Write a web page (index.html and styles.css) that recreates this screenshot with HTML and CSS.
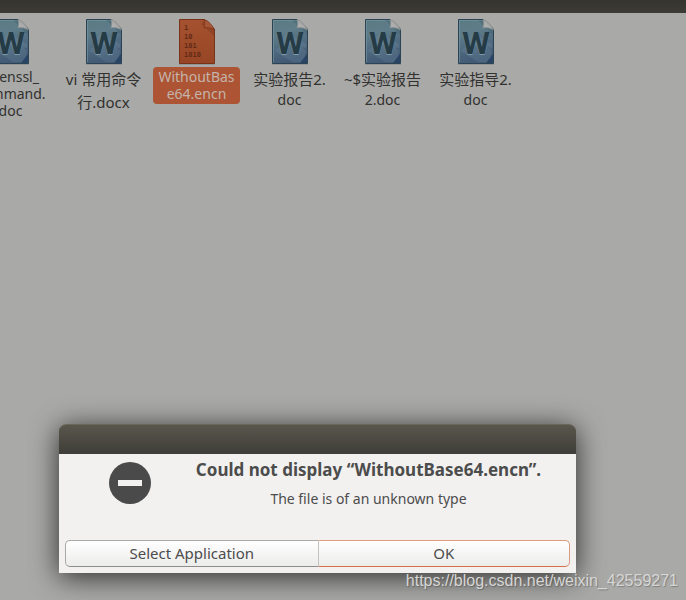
FILE: index.html
```html
<!DOCTYPE html>
<html lang="en">
<head>
<meta charset="utf-8">
<title>Files</title>
<link rel="stylesheet" href="styles.css">
</head>
<body>
<svg class="defs" aria-hidden="true">
  <defs>
    <linearGradient id="page" x1="0" y1="0" x2="0.25" y2="1">
      <stop offset="0" stop-color="#5a7b82"/>
      <stop offset="0.35" stop-color="#5e7c89"/>
      <stop offset="0.7" stop-color="#4e687e"/>
      <stop offset="1" stop-color="#425a74"/>
    </linearGradient>
    <linearGradient id="fold" x1="0" y1="1" x2="0.8" y2="0.2">
      <stop offset="0" stop-color="#bcbcba"/>
      <stop offset="0.6" stop-color="#a8a9a8"/>
      <stop offset="1" stop-color="#747a7c"/>
    </linearGradient>
    <linearGradient id="orange" x1="0" y1="0" x2="0" y2="1">
      <stop offset="0" stop-color="#a4522f"/>
      <stop offset="1" stop-color="#984525"/>
    </linearGradient>
    <symbol id="word" viewBox="0 0 36 46">
      <rect x="0" y="44" width="36" height="2" fill="#000" opacity="0.12"/>
      <path d="M.5.5H25L35.500 10V44.500H.5Z" fill="url(#page)" stroke="#2b4354"/>
      <path d="M1.500 43.500V1.500H25" fill="none" stroke="#7898a0" opacity="0.6"/>
      <path d="M3 32L18 17L34 32L32 43H20Z" fill="#8aa9bd" opacity="0.16"/>
      <path d="M7 24L15 14L34 25V29Z" fill="#9bb7c4" opacity="0.16"/>
      <path d="M35 35V44H28Z" fill="#294464"/>
      <path d="M20 1H25V9L35 11V16Z" fill="#28434c" opacity="0.2"/>
      <path d="M25 .5C26 3 26 6 25 9C29 8 33 9 35.500 11C33 6 30 2 25 .5Z" fill="url(#fold)" stroke="#8a8f8f" stroke-width=".6"/>
      <text x="18" y="36" class="glyph-w glyph-light">W</text>
      <text x="18" y="35" class="glyph-w">W</text>
    </symbol>
  </defs>
</svg>

<div class="desktop">
  <header class="panel"></header>
  <main class="files">
    <figure class="file">
      <svg class="icon" aria-hidden="true"><use href="#word"/></svg>
      <figcaption class="label"><span>openssl_</span><span>command.</span><span>doc</span></figcaption>
    </figure>
    <figure class="file">
      <svg class="icon" aria-hidden="true"><use href="#word"/></svg>
      <figcaption class="label"><span class="tall">vi 常用命令</span><span class="tall">行.docx</span></figcaption>
    </figure>
    <figure class="file selected">
      <svg class="icon" viewBox="0 0 36 46" aria-hidden="true">
        <rect x="0" y="44" width="36" height="2" fill="#000" opacity="0.12"/>
        <path d="M.5.5H25L35.500 10V44.500H.5Z" fill="url(#orange)" stroke="#783219"/>
        <path d="M25 1V9L35 10V17L22 5Z" fill="#6c2c16" opacity="0.3"/>
        <path d="M25 .5C26 3 26 6 25 9C29 8 33 9 35.500 11C33 6 30 2 25 .5Z" fill="#a65735" stroke="#783219" stroke-width=".8"/>
        <g class="bits">
          <text x="5" y="11">1</text>
          <text x="5" y="20">10</text>
          <text x="5" y="29">101</text>
          <text x="5" y="38">1010</text>
        </g>
      </svg>
      <figcaption class="label"><span>WithoutBas</span><span>e64.encn</span></figcaption>
    </figure>
    <figure class="file">
      <svg class="icon" aria-hidden="true"><use href="#word"/></svg>
      <figcaption class="label"><span class="tall">实验报告2.</span><span>doc</span></figcaption>
    </figure>
    <figure class="file">
      <svg class="icon" aria-hidden="true"><use href="#word"/></svg>
      <figcaption class="label"><span class="tall">~$实验报告</span><span>2.doc</span></figcaption>
    </figure>
    <figure class="file">
      <svg class="icon" aria-hidden="true"><use href="#word"/></svg>
      <figcaption class="label"><span class="tall">实验指导2.</span><span>doc</span></figcaption>
    </figure>
  </main>

  <section class="dialog" role="alertdialog" aria-labelledby="title" aria-describedby="detail">
    <div class="titlebar"></div>
    <div class="body">
      <div class="message">
        <svg class="sign" viewBox="0 0 42 42" aria-hidden="true">
          <circle cx="21" cy="21" r="21" fill="#4a4a4a"/>
          <rect x="9" y="18" width="24" height="6" fill="#f2f1f0"/>
        </svg>
        <div class="words">
          <h1 id="title">Could not display “WithoutBase64.encn”.</h1>
          <p id="detail">The file is of an unknown type</p>
        </div>
      </div>
      <div class="actions">
        <button type="button">Select Application</button>
        <button type="button" class="default">OK</button>
      </div>
    </div>
  </section>
  <div class="watermark">https://blog.csdn.net/weixin_42559271</div>
</div>
</body>
</html>
```
FILE: styles.css
```css
* {
  box-sizing: border-box;
}

body {
  margin: 0;
  font-family: "Noto Sans", "Noto Sans CJK SC", sans-serif;
  font-size: 14px;
  color: #4c4c4c;
}

.defs {
  position: absolute;
  width: 0;
  height: 0;
}

.desktop {
  position: relative;
  min-height: 100vh;
  overflow: hidden;
  background: #a9a9a7;
}

.panel {
  height: 13px;
  background: linear-gradient(#35342f, #3c3b36);
}

.files {
  display: grid;
  grid-template-columns: repeat(auto-fill, 93px);
  margin-left: -36px;
  padding-top: 6px;
}

.file {
  display: flex;
  flex-direction: column;
  align-items: center;
  gap: 2px;
  margin: 0;
}

.icon {
  width: 36px;
  height: 46px;
}

.glyph-w {
  font: bold 32px Roboto, sans-serif;
  text-anchor: middle;
  fill: #253b45;
}

.glyph-light {
  fill: #7b9aac;
}

.bits {
  font: bold 7px "DejaVu Sans Mono", monospace;
  fill: #612b17;
}

.label {
  padding: 1px 5px;
  border-radius: 4px;
  line-height: 17px;
  text-align: center;
  white-space: nowrap;
  color: #31312f;
}

.label span {
  display: block;
}

.label .tall {
  font-size: 15px;
  line-height: 23px;
}

.selected .label {
  padding-bottom: 2px;
  background: #ac5433;
  color: #c4b4ac;
}

.dialog {
  position: absolute;
  left: 59px;
  right: 110px;
  bottom: 27px;
  border-radius: 7px 7px 0 0;
  box-shadow: 0 4px 28px rgba(0, 0, 0, 0.75);
}

.titlebar {
  height: 30px;
  border-top: 1px solid #6a665a;
  border-radius: 7px 7px 0 0;
  background: linear-gradient(#59564c, #3e3d38);
}

.body {
  padding: 4px 6px 6px;
  background: #f2f1f0;
}

.message {
  display: flex;
  gap: 44px;
  padding: 0 28px 0 44px;
  min-height: 82px;
}

.sign {
  flex: none;
  width: 42px;
  height: 42px;
  margin-top: 4px;
}

.words {
  flex: 1;
  text-align: center;
  white-space: nowrap;
}

h1 {
  margin: 0;
  font-size: 17px;
  line-height: 24px;
}

p {
  margin: 7px 0 0;
  line-height: 20px;
}

.actions {
  display: grid;
  grid-template-columns: 1fr 1fr;
}

button {
  height: 27px;
  padding: 0 0 2px;
  border: 1px solid #aaa9a7;
  border-bottom-color: #8f8d8a;
  border-right: 0;
  border-radius: 5px 0 0 5px;
  background: linear-gradient(#fff, #ececeb);
  font-family: inherit;
  font-size: 15px;
  line-height: 20px;
  color: inherit;
}

.default {
  border: 1px solid #dc9a80;
  border-bottom-color: #d46f4b;
  border-left-color: #c5c4c2;
  border-radius: 0 5px 5px 0;
}

.watermark {
  position: absolute;
  right: 8px;
  bottom: 10px;
  font: 16px/18px "Liberation Sans", sans-serif;
  color: #d6d6d5;
  text-shadow: 1px 1px 1px rgba(0, 0, 0, 0.25);
}
```
